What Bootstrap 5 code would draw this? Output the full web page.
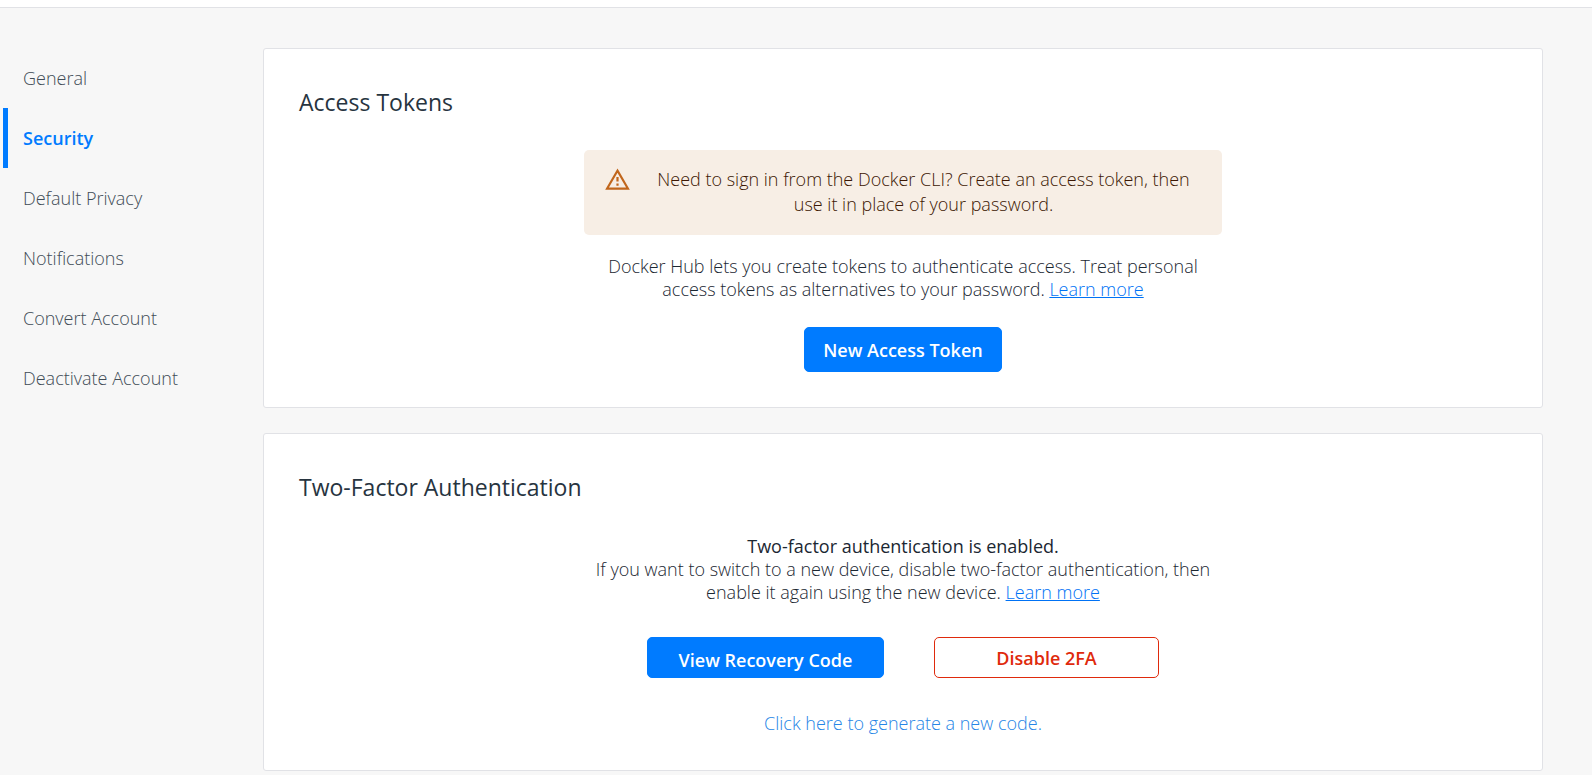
<!DOCTYPE html>
<html lang="en">
<head>
<meta charset="utf-8">
<meta name="viewport" content="width=device-width, initial-scale=1">
<title>Account Settings - Security</title>
<link href="https://cdn.jsdelivr.net/npm/bootstrap@5.3.0/dist/css/bootstrap.min.css" rel="stylesheet">
<style>
  body { background: #f7f7f7; color: #1b2732; font-family: "Open Sans", sans-serif; font-size: 18px; line-height: 23px; font-weight: 300; }
  a { color: #0072f5; }
  .topbar { height: 8px; background: #fff; border-bottom: 1px solid #e1e2e6; }
  .settings { padding: 40px 49px 0 3px; }
  .side-menu { width: 260px; }
  .side-menu .nav-link { color: #414c56; line-height: 24px; padding: 18px 15px; border-left: 5px solid transparent; }
  .side-menu .nav-link.active { color: #007bff; font-weight: 600; border-left-color: #007bff; }
  .panel { min-width: 0; border: 1px solid #e1e2e6; border-radius: 3px; padding: 35px; }
  .panel + .panel { margin-top: 25px; }
  .panel h2 { font-size: 23px; line-height: 36px; font-weight: 400; margin: 0; color: #27343f; }
  .panel-content { max-width: 638px; padding-top: 30px; }
  .notice { background: #f7eee5; color: #3c1703; border: 0; border-radius: 5px; line-height: 25px; padding: 17px 22px 18px 21px; gap: 17px; margin-bottom: 20px; }
  .notice svg { margin-top: 1px; }
  .intro { margin-bottom: 26px; }
  .status-line { font-weight: 500; }
  .btn { font-size: 18px; line-height: 23px; font-weight: 600; border-radius: 5px; }
  .btn-primary { --bs-btn-bg: #007bff; --bs-btn-border-color: #007bff; }
  .btn-outline-danger { --bs-btn-color: #df2a0c; --bs-btn-border-color: #df2a0c; }
  .btn-token { padding: 11px 18px 9px; }
  .btn-recovery { width: 237px; padding: 11px 8px 5px; }
  .btn-disable { width: 225px; padding: 9px 8px 7px; }
  .actions { gap: 16px 50px; padding: 33px 0; }
  .link-generate { color: #2685e6; line-height: 24px; }
</style>
</head>
<body>
<header class="topbar"></header>
<div class="settings d-flex">
  <nav class="side-menu nav flex-column flex-shrink-0" aria-label="Account settings">
    <a class="nav-link" href="#">General</a>
    <a class="nav-link active" aria-current="page" href="#">Security</a>
    <a class="nav-link" href="#">Default Privacy</a>
    <a class="nav-link" href="#">Notifications</a>
    <a class="nav-link" href="#">Convert Account</a>
    <a class="nav-link" href="#">Deactivate Account</a>
  </nav>
  <main class="flex-grow-1">
    <section class="panel bg-white">
      <h2>Access Tokens</h2>
      <div class="panel-content mx-auto text-center">
        <div class="alert notice d-flex align-items-start" role="alert">
          <svg class="flex-shrink-0" width="25" height="22" viewBox="0 0 25 22" aria-hidden="true">
            <path d="M12.5 2.6 L23 20.6 H2 Z" fill="none" stroke="#c1661c" stroke-width="2.1"/>
            <path d="M12.5 9 V13.5 M12.5 15.5 V17.7" stroke="#c1661c" stroke-width="2.2"/>
          </svg>
          <div class="flex-grow-1">Need to sign in from the Docker CLI? Create an access token, then use it in place of your password.</div>
        </div>
        <p class="intro">Docker Hub lets you create tokens to authenticate access. Treat personal access tokens as alternatives to your password. <a href="#">Learn more</a></p>
        <button type="button" class="btn btn-primary btn-token">New Access Token</button>
      </div>
    </section>
    <section class="panel bg-white">
      <h2>Two-Factor Authentication</h2>
      <div class="panel-content mx-auto text-center">
        <p class="mb-0"><strong class="status-line d-block">Two-factor authentication is enabled.</strong>
        If you want to switch to a new device, disable two-factor authentication, then enable it again using the new device. <a href="#">Learn more</a></p>
        <div class="actions d-flex flex-wrap justify-content-center">
          <button type="button" class="btn btn-primary btn-recovery">View Recovery Code</button>
          <button type="button" class="btn btn-outline-danger btn-disable">Disable 2FA</button>
        </div>
        <a class="link-generate d-inline-block text-decoration-none" href="#">Click here to generate a new code.</a>
      </div>
    </section>
  </main>
</div>
<script src="https://cdn.jsdelivr.net/npm/bootstrap@5.3.0/dist/js/bootstrap.bundle.min.js"></script>
</body>
</html>
